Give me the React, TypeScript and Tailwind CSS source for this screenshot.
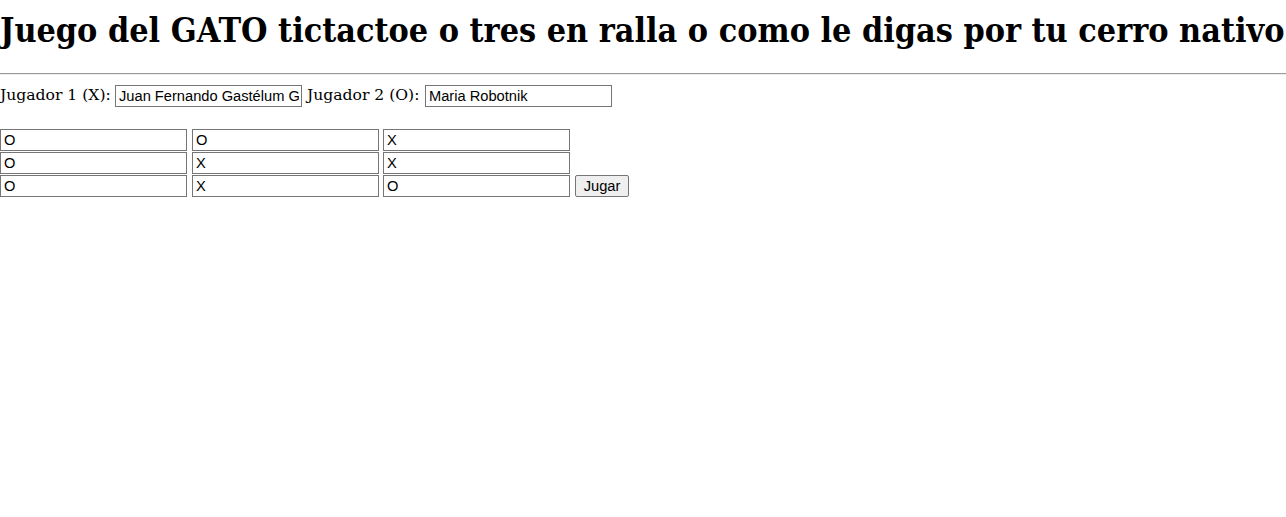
export default function App() {
  const board = [
    ["O", "O", "X"],
    ["O", "X", "X"],
    ["O", "X", "O"],
  ];
  const inputCls =
    "w-[187px] h-[22px] border border-[#767676] bg-white pl-[3px] pr-[2px] text-[14.67px] text-black outline-none [font-family:'Liberation_Sans',Arial,sans-serif]";

  return (
    <div className="min-h-[517px] bg-white text-black [font-family:'DejaVu_Serif',serif]">
      <h1 className="pt-[10px] h-[58px] whitespace-nowrap text-[33.8px] font-bold leading-[40px] [font-family:'DejaVu_Serif_Condensed','DejaVu_Serif',serif]">
        Juego del GATO tictactoe o tres en ralla o como le digas por tu cerro nativo
      </h1>
      <div className="mt-[15px] border-t border-b border-t-[#9a9a9a] border-b-[#eeeeee]" />

      <div className="mt-[10px] flex h-[22px] items-center text-[15.6px]">
        <span className="w-[115px] whitespace-nowrap">Jugador 1 (X):</span>
        <input className={inputCls} defaultValue="Juan Fernando Gastélum Gonzalez" />
        <span className="ml-[5px] w-[118px] whitespace-nowrap">Jugador 2 (O):</span>
        <input className={inputCls} defaultValue="Maria Robotnik" />
      </div>

      <div className="mt-[22px] flex flex-col gap-[1px]">
        {board.map((row, r) => (
          <div key={r} className="flex items-end">
            <input className={inputCls} defaultValue={row[0]} />
            <input className={`ml-[5px] ${inputCls}`} defaultValue={row[1]} />
            <input className={`ml-[4px] ${inputCls}`} defaultValue={row[2]} />
            {r === 2 && (
              <button className="ml-[5px] h-[22px] w-[54px] rounded-[2px] border border-[#767676] bg-[#efefef] pb-[1px] text-[14.67px] leading-[18px] [font-family:'Liberation_Sans',Arial,sans-serif]">
                Jugar
              </button>
            )}
          </div>
        ))}
      </div>
    </div>
  );
}
